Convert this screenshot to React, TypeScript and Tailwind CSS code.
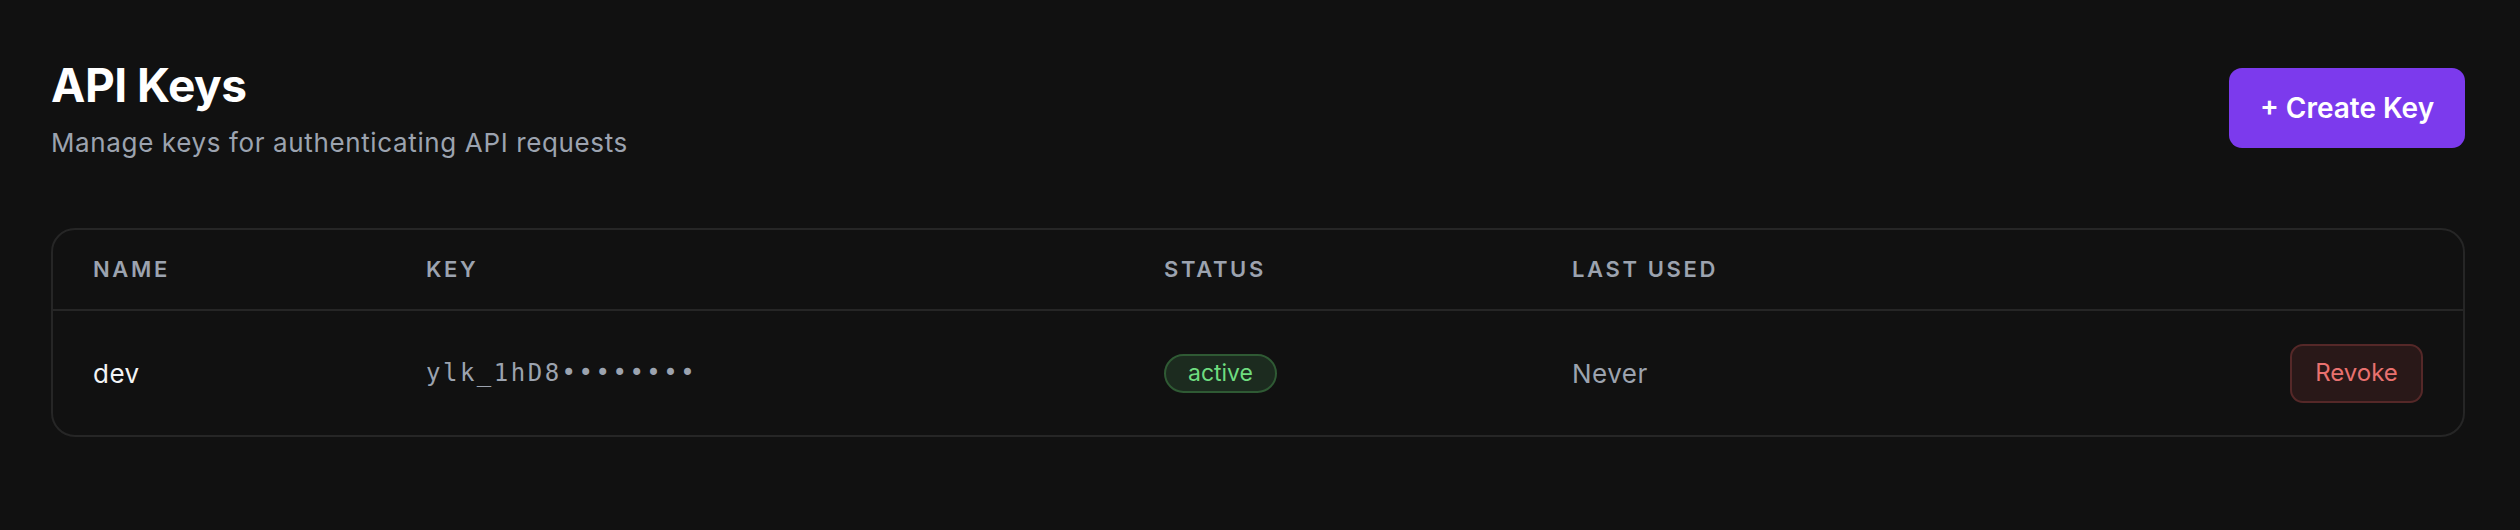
import React from "react";

interface ApiKey {
  id: string;
  name: string;
  prefix: string;
  status: "active" | "revoked";
  lastUsed: string | null;
}

const keys: ApiKey[] = [
  { id: "k1", name: "dev", prefix: "ylk_1hD8", status: "active", lastUsed: null },
];

const cols = "grid grid-cols-[333px_738px_408px_1fr_auto] items-center";

export default function App() {
  return (
    <div
      className="min-h-screen w-full bg-[#111111] pl-[51px] pr-[55px] pt-[59px] text-white"
      style={{ fontFamily: "Inter, 'Noto Sans', sans-serif" }}
    >
      {/* Header */}
      <div className="flex items-start justify-between">
        <div>
          <h1 className="text-[46px] font-bold leading-[53px] tracking-[-0.01em] text-white">API Keys</h1>
          <p className="mt-[12px] text-[26px] leading-[38px] tracking-[0.63px] text-[#9ca3af]">
            Manage keys for authenticating API requests
          </p>
        </div>
        <button className="mt-[9px] h-[80px] w-[236px] rounded-[13px] bg-[#7c3aed] text-[28px] font-semibold text-white">
          + Create Key
        </button>
      </div>

      {/* Table */}
      <div className="mt-[66px] overflow-hidden rounded-[24px] border-2 border-[#262626]">
        <div className={`${cols} h-[81px] border-b-2 border-[#262626] text-[22px] font-semibold uppercase tracking-[0.12em] text-[#9ca3af]`}>
          <div className="px-[40px]">Name</div>
          <div className="px-[40px]">Key</div>
          <div className="px-[40px]">Status</div>
          <div className="px-[40px]">Last Used</div>
          <div className="px-[40px]" />
        </div>

        {keys.map((k) => (
          <div key={k.id} className={`${cols} h-[124px]`}>
            <div className="px-[40px] text-[26px] tracking-[0.5px] text-[#f3f4f6]">{k.name}</div>
            <div
              className="px-[40px] text-[24px] tracking-[2.5px] text-[#9ca3af]"
              style={{ fontFamily: "'DejaVu Sans Mono', monospace" }}
            >
              {k.prefix}••••••••
            </div>
            <div className="px-[40px]">
              <span className="inline-flex h-[39px] w-[113px] items-center justify-center rounded-full border-2 border-[#2f5a34] bg-[#1c2b1f] text-[23px] text-[#6fdc7f]">
                {k.status}
              </span>
            </div>
            <div className="px-[40px] text-[26px] tracking-[0.5px] text-[#9ca3af]">{k.lastUsed ?? "Never"}</div>
            <div className="px-[40px]">
              <button className="h-[59px] w-[133px] rounded-[13px] border-2 border-[#552828] bg-[#291818] text-[24px] text-[#e8716f]">
                Revoke
              </button>
            </div>
          </div>
        ))}
      </div>
    </div>
  );
}
